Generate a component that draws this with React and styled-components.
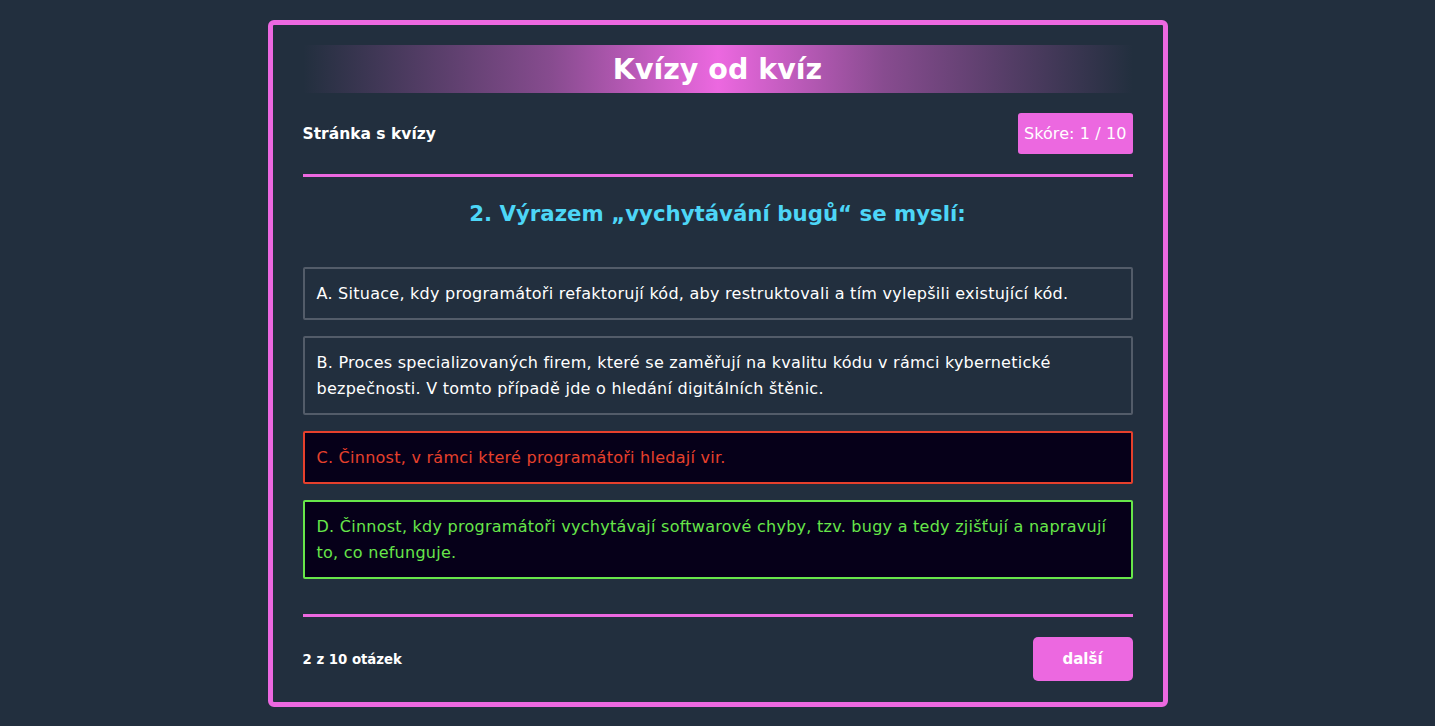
import React from 'react';
import styled, {createGlobalStyle} from 'styled-components';

const GlobalStyle = createGlobalStyle`
    body {
        margin: 0;
        background: #222f3e;
        font-family: "DejaVu Sans", "Open Sans", sans-serif;
        color: #ffffff;
    }
`;

const Page = styled.div`
    display: flex;
    justify-content: center;
    padding-top: 20px;
`;

const Card = styled.div`
    width: 830px;
    padding: 20px 30px 21px 30px;
    border: 5px solid #ec68e0;
    border-radius: 6px;
    background: #222f3e;
`;

const Banner = styled.h1`
    margin: 0;
    height: 48px;
    display: flex;
    align-items: center;
    justify-content: center;
    font-size: 28.5px;
    font-weight: 700;
    color: #ffffff;
    background: linear-gradient(90deg, rgba(236, 104, 224, 0) 0%, rgba(236, 104, 224, 0.5) 30%, #ec68e0 50%, rgba(236, 104, 224, 0.5) 70%, rgba(236, 104, 224, 0) 100%);
`;

const TopBar = styled.div`
    display: flex;
    justify-content: space-between;
    align-items: center;
    padding: 20px 0 20px 0;
    border-bottom: 3px solid #ec68e0;
`;

const SiteName = styled.span`
    font-size: 15.5px;
    font-weight: 700;
`;

const Score = styled.span`
    background: #ec68e0;
    border-radius: 3px;
    padding: 0 6px;
    height: 41px;
    display: flex;
    align-items: center;
    font-size: 16px;
    letter-spacing: 0.1px;
`;

const Question = styled.h2`
    margin: 22px 0 38px 0;
    line-height: 30px;
    text-align: center;
    color: #4dd6f7;
    font-size: 21.3px;
    font-weight: 700;
`;

const Answers = styled.div`
    display: flex;
    flex-direction: column;
    gap: 16px;
    padding-bottom: 35px;
    border-bottom: 3px solid #ec68e0;
`;

const tone = {
    neutral: {border: '#535c69', color: '#ffffff', bg: 'transparent'},
    wrong: {border: '#e6402c', color: '#e6402c', bg: '#060019'},
    right: {border: '#67e64a', color: '#67e64a', bg: '#060019'},
};

const Answer = styled.div`
    border: 2px solid ${p => tone[p.state].border};
    background: ${p => tone[p.state].bg};
    color: ${p => tone[p.state].color};
    border-radius: 2px;
    padding: 12px 12px 11px 12px;
    font-size: 16px;
    line-height: 26px;
    letter-spacing: 0.26px;
`;

const Footer = styled.div`
    display: flex;
    justify-content: space-between;
    align-items: center;
    padding-top: 20px;
`;

const Counter = styled.span`
    font-size: 13.3px;
    font-weight: 700;
`;

const NextButton = styled.button`
    width: 100px;
    height: 44px;
    border: none;
    border-radius: 5px;
    background: #ec68e0;
    color: #ffffff;
    font-family: inherit;
    font-size: 15px;
    font-weight: 700;
    cursor: pointer;
`;

const answers = [
    {text: 'A. Situace, kdy programátoři refaktorují kód, aby restruktovali a tím vylepšili existující kód.', state: 'neutral'},
    {text: 'B. Proces specializovaných firem, které se zaměřují na kvalitu kódu v rámci kybernetické bezpečnosti. V tomto případě jde o hledání digitálních štěnic.', state: 'neutral'},
    {text: 'C. Činnost, v rámci které programátoři hledají vir.', state: 'wrong'},
    {text: 'D. Činnost, kdy programátoři vychytávají softwarové chyby, tzv. bugy a tedy zjišťují a napravují to, co nefunguje.', state: 'right'},
];

export default function App() {
    return (
        <>
            <GlobalStyle />
            <Page>
                <Card>
                    <Banner>Kvízy od kvíz</Banner>
                    <TopBar>
                        <SiteName>Stránka s kvízy</SiteName>
                        <Score>Skóre: 1 / 10</Score>
                    </TopBar>
                    <Question>2. Výrazem „vychytávání bugů“ se myslí:</Question>
                    <Answers>
                        {answers.map((a, i) => (
                            <Answer key={i} state={a.state}>{a.text}</Answer>
                        ))}
                    </Answers>
                    <Footer>
                        <Counter>2 z 10 otázek</Counter>
                        <NextButton>další</NextButton>
                    </Footer>
                </Card>
            </Page>
        </>
    );
}
